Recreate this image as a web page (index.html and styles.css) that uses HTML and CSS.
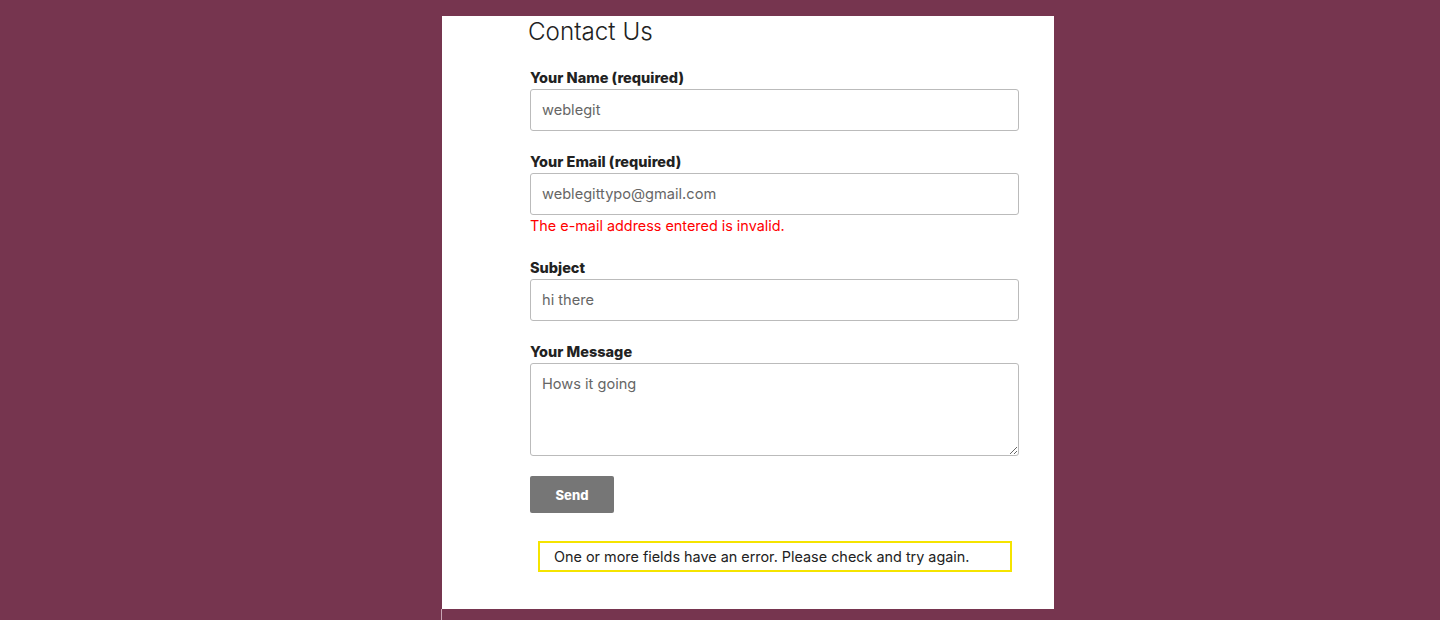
FILE: index.html
```html
<!DOCTYPE html>
<html lang="en">
<head>
<meta charset="utf-8">
<title>Contact Us</title>
<link rel="stylesheet" href="styles.css">
</head>
<body>
<main class="panel">
  <h1 class="title">Contact Us</h1>
  <form class="form" onsubmit="return false">
    <div class="field">
      <label class="label" for="name">Your Name (required)</label>
      <input class="input" id="name" type="text" value="weblegit">
    </div>
    <div class="field field-error">
      <label class="label" for="email">Your Email (required)</label>
      <input class="input" id="email" type="text" value="weblegittypo@gmail.com">
      <span class="tip">The e-mail address entered is invalid.</span>
    </div>
    <div class="field">
      <label class="label" for="subject">Subject</label>
      <input class="input" id="subject" type="text" value="hi there">
    </div>
    <div class="field field-last">
      <label class="label" for="message">Your Message</label>
      <textarea class="input textarea" id="message">Hows it going</textarea>
    </div>
    <button class="send" type="submit">Send</button>
    <div class="response">One or more fields have an error. Please check and try again.</div>
  </form>
</main>
<div class="below"></div>
</body>
</html>
```

FILE: styles.css
```css
html, body {
  margin: 0;
  padding: 0;
}
body {
  background: #76354f;
  padding-top: 16px;
  height: 620px;
  box-sizing: border-box;
  overflow: hidden;
  font-family: "Inter", "Liberation Sans", sans-serif;
  color: #222;
}
.panel {
  width: 612px;
  margin-left: 442px;
  background: #fff;
  box-sizing: border-box;
  padding: 3px 35px 37px 88px;
}
.title {
  margin: 0 0 23px -2px;
  font-size: 24.2px;
  font-weight: 300;
  line-height: 26px;
  color: #222;
}
.form {
  display: flex;
  flex-direction: column;
  align-items: flex-start;
}
.field {
  width: 100%;
  display: flex;
  flex-direction: column;
  margin-bottom: 21px;
}
.field-last {
  margin-bottom: 20px;
}
.label {
  font-size: 14.5px;
  font-weight: 800;
  line-height: 20px;
  margin-bottom: 1px;
  color: #222;
}
.input {
  box-sizing: border-box;
  width: 100%;
  height: 42px;
  margin: 0;
  padding: 0 11px;
  border: 1px solid #bbb;
  border-radius: 3px;
  font-family: inherit;
  font-size: 14.6px;
  color: #666;
  background: #fff;
}
.textarea {
  height: 93px;
  padding: 10px 11px;
  line-height: 20px;
  resize: vertical;
}
.tip {
  color: #f00;
  font-size: 14.4px;
  line-height: 19px;
  margin: 1px 0 2px;
}
.send {
  width: 84px;
  height: 37px;
  border: none;
  border-radius: 2px;
  background: #767676;
  color: #fff;
  font-family: inherit;
  font-size: 13px;
  font-weight: 800;
  padding: 0;
}
.response {
  align-self: stretch;
  margin: 28px 7px 0 8px;
  border: 2px solid #f5e400;
  padding: 0 14px;
  line-height: 27px;
  font-size: 14.4px;
  color: #222;
}
.below {
  width: 0;
  height: 20px;
  margin-left: 441px;
  border-left: 1px solid #c8a6b4;
}
```
